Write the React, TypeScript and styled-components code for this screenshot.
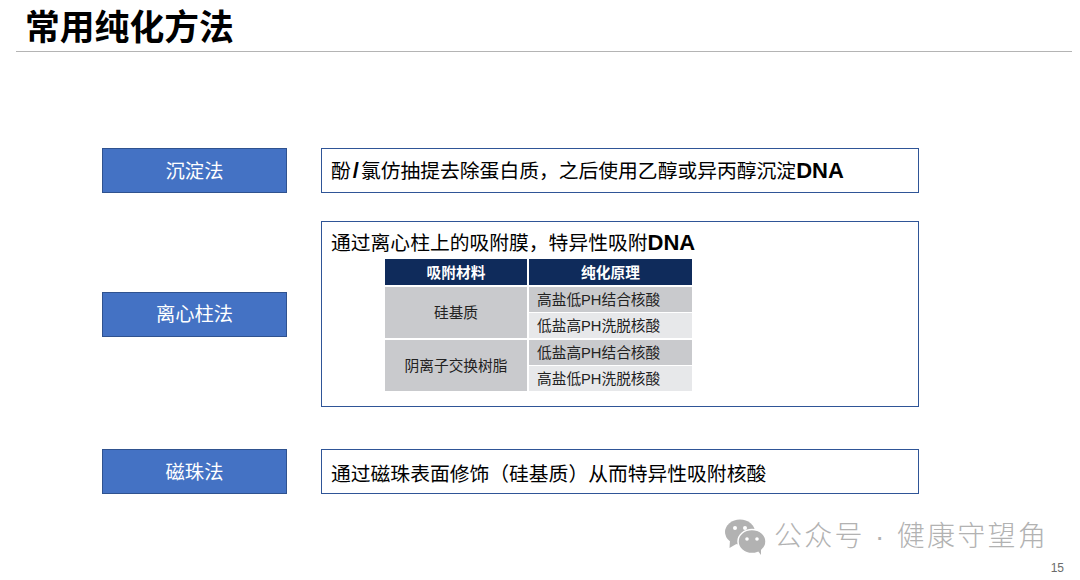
import React from 'react';
import styled, { createGlobalStyle } from 'styled-components';

const GlobalStyle = createGlobalStyle`
  html, body {
    margin: 0;
    padding: 0;
    background: #fff;
  }
  * {
    box-sizing: border-box;
  }
`;

const Slide = styled.div`
  position: relative;
  width: 1080px;
  height: 580px;
  overflow: hidden;
  background: #fff;
  font-family: "Liberation Sans", "Noto Sans CJK SC", sans-serif;
`;

const Header = styled.div`
  margin: 0 8px 0 16px;
  height: 52px;
  padding: 6px 0 0 9px;
  border-bottom: 1px solid #b4b4b4;
`;

const Title = styled.h1`
  margin: 0;
  font-size: 34.8px;
  line-height: 44px;
  font-weight: 700;
  color: #000;
`;

const Body = styled.div`
  display: flex;
  flex-direction: column;
  padding: 96px 0 0 102px;
`;

const Row = styled.div<{ $gap?: number }>`
  display: flex;
  align-items: center;
  gap: 34px;
  margin-top: ${(p) => p.$gap ?? 0}px;
`;

const Method = styled.div`
  flex: none;
  width: 185px;
  height: 45px;
  display: flex;
  align-items: center;
  justify-content: center;
  padding-bottom: 2px;
  background: #4472c4;
  border: 1px solid #2f528f;
  color: #fff;
  font-size: 19.3px;
`;

const Box = styled.div`
  width: 598px;
  border: 1px solid #2f5597;
  padding: 0 9px;
`;

const BoxLine = styled.div<{ $height: number; $shift: number }>`
  display: flex;
  align-items: center;
  height: ${(p) => p.$height}px;
  padding-top: ${(p) => Math.max(p.$shift, 0)}px;
  padding-bottom: ${(p) => Math.max(-p.$shift, 0)}px;
  font-size: 19.8px;
  color: #000;
  white-space: nowrap;

  b {
    font-weight: 700;
    font-size: 22px;
  }
`;

const Slash = styled.b`
  margin: 0 2px;
`;

const TableGrid = styled.div`
  display: grid;
  grid-template-columns: 142px 163px;
  grid-template-rows: 26px 25px 25px 25px 25px;
  column-gap: 2px;
  row-gap: 1.5px;
  margin: 0 0 15px 54px;
`;

const HeadCell = styled.div`
  display: flex;
  align-items: center;
  justify-content: center;
  padding-bottom: 2px;
  background: #0f2b5b;
  color: #fff;
  font-size: 14.7px;
  font-weight: 700;
`;

const MaterialCell = styled.div`
  grid-row: span 2;
  display: flex;
  align-items: center;
  justify-content: center;
  padding-bottom: 2px;
  background: #c9cacd;
  color: #222;
  font-size: 14.7px;
`;

const PrincipleCell = styled.div<{ $dark?: boolean }>`
  display: flex;
  align-items: center;
  padding: 0 0 2px 8px;
  background: ${(p) => (p.$dark ? '#c9cacd' : '#e7e8ea')};
  color: #222;
  font-size: 14.7px;
  white-space: nowrap;
`;

const Watermark = styled.div`
  position: absolute;
  left: 725px;
  top: 519px;
  display: flex;
  align-items: center;
  gap: 8px;
  color: #b2b2b2;
  font-size: 28px;
  font-weight: 300;
  line-height: 36px;
  letter-spacing: 2.3px;
  white-space: nowrap;
`;

const PageNumber = styled.div`
  position: absolute;
  right: 16px;
  top: 561px;
  font-size: 12px;
  line-height: 14px;
  color: #6b6b6b;
`;

function WechatMark() {
  return (
    <svg width="41" height="36" viewBox="0 0 41 36" fill="#b2b2b2">
      <ellipse cx="15" cy="13" rx="15" ry="12.5" />
      <path d="M5 21 L4.5 29 L13 24 Z" />
      <ellipse cx="27" cy="22.5" rx="14" ry="12" stroke="#fff" strokeWidth="1.5" />
      <path d="M33 32 L36 36 L36 29 Z" />
      <circle cx="10" cy="9" r="2" fill="#fff" />
      <circle cx="20" cy="9" r="2" fill="#fff" />
      <circle cx="22" cy="20" r="1.8" fill="#fff" />
      <circle cx="32" cy="20" r="1.8" fill="#fff" />
    </svg>
  );
}

export default function App() {
  return (
    <Slide>
      <GlobalStyle />
      <Header>
        <Title>常用纯化方法</Title>
      </Header>
      <Body>
        <Row>
          <Method>沉淀法</Method>
          <Box>
            <BoxLine $height={43} $shift={-2}>
              <span>酚<Slash>/</Slash>氯仿抽提去除蛋白质，之后使用乙醇或异丙醇沉淀<b>DNA</b></span>
            </BoxLine>
          </Box>
        </Row>
        <Row $gap={28}>
          <Method>离心柱法</Method>
          <Box>
            <BoxLine $height={37} $shift={2}>
              <span>通过离心柱上的吸附膜，特异性吸附<b>DNA</b></span>
            </BoxLine>
            <TableGrid>
              <HeadCell>吸附材料</HeadCell>
              <HeadCell>纯化原理</HeadCell>
              <MaterialCell>硅基质</MaterialCell>
              <PrincipleCell $dark>高盐低PH结合核酸</PrincipleCell>
              <PrincipleCell>低盐高PH洗脱核酸</PrincipleCell>
              <MaterialCell>阴离子交换树脂</MaterialCell>
              <PrincipleCell $dark>低盐高PH结合核酸</PrincipleCell>
              <PrincipleCell>高盐低PH洗脱核酸</PrincipleCell>
            </TableGrid>
          </Box>
        </Row>
        <Row $gap={42}>
          <Method>磁珠法</Method>
          <Box>
            <BoxLine $height={43} $shift={2}>
              <span>通过磁珠表面修饰（硅基质）从而特异性吸附核酸</span>
            </BoxLine>
          </Box>
        </Row>
      </Body>
      <Watermark>
        <WechatMark />
        <span>公众号 · 健康守望角</span>
      </Watermark>
      <PageNumber>15</PageNumber>
    </Slide>
  );
}
